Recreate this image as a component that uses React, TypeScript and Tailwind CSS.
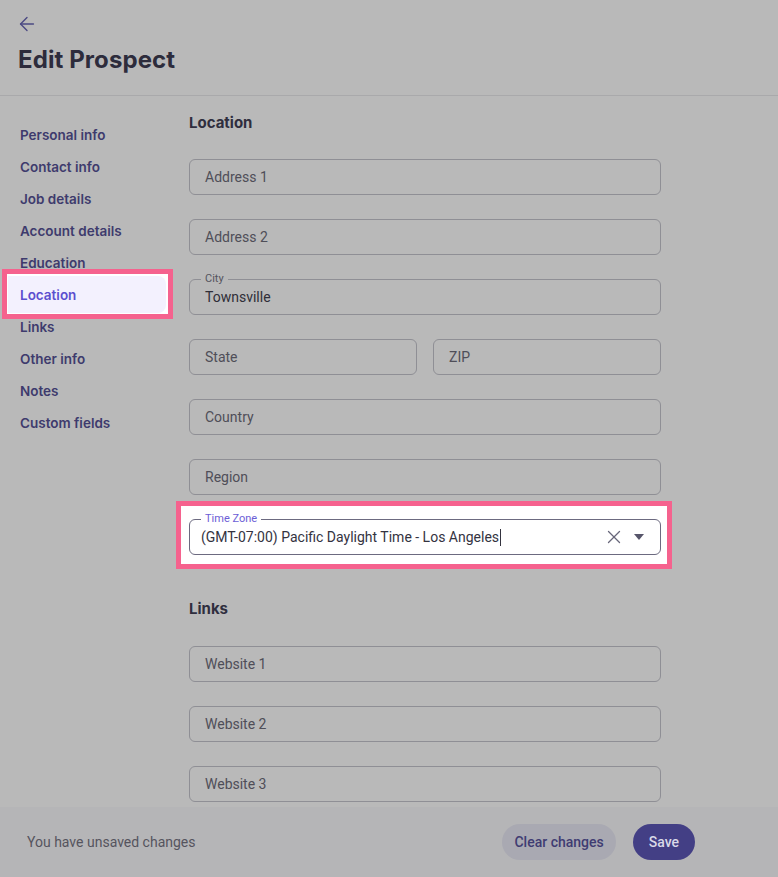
import React from 'react';
import { ArrowLeft, X } from 'lucide-react';

const navItems = [
  'Personal info',
  'Contact info',
  'Job details',
  'Account details',
  'Education',
  'Location',
  'Links',
  'Other info',
  'Notes',
  'Custom fields',
];

// Campo con placeholder simple
const Field: React.FC<{ placeholder: string; className?: string }> = ({ placeholder, className = '' }) => (
  <div
    className={`h-9 rounded-md border border-[#8f8f95] flex items-center pl-[15px] pr-4 text-sm text-[#4f4e58] ${className}`}
    style={{ fontFamily: 'Roboto, sans-serif' }}
  >
    {placeholder}
  </div>
);

// Campo con etiqueta flotante
const FilledField: React.FC<{ label: string; value: string }> = ({ label, value }) => (
  <div
    className="relative h-9 rounded-md border border-[#8f8f95] flex items-center pl-[15px] pr-4 text-sm text-[#2f2e38]"
    style={{ fontFamily: 'Roboto, sans-serif' }}
  >
    <span className="absolute -top-[7px] left-[11px] px-1 bg-[#b9b9b9] text-[11px] leading-[12px] text-[#55545e]">
      {label}
    </span>
    {value}
  </div>
);

const App: React.FC = () => {
  return (
    <div className="h-screen flex flex-col bg-[#b9b9b9] overflow-hidden" style={{ fontFamily: 'Inter, sans-serif' }}>
      {/* Encabezado */}
      <header className="border-b border-[#a9a9ab] px-[18px] pt-[13px] pb-[20px]">
        <ArrowLeft className="w-[22px] h-[22px] text-[#4b4983] -ml-[2px]" strokeWidth={1.5} />
        <h1 className="mt-[10px] text-[24px] leading-[30px] font-bold text-[#2d2c3c] tracking-[0.1px]">Edit Prospect</h1>
      </header>

      <div className="flex-1 flex min-h-0 overflow-hidden">
        {/* Menú lateral */}
        <nav className="w-[189px] shrink-0 pt-[23px]">
          <ul>
            {navItems.map((item) => {
              const active = item === 'Location';
              return (
                <li key={item} className="relative h-8 flex items-center pl-5 w-[172px]">
                  {active && (
                    <div className="absolute left-[2px] right-[-1px] -top-[10px] -bottom-[8px] border-[5px] border-[#f5628e] bg-white">
                      <div className="absolute left-[1px] right-[2px] top-[2px] bottom-[1px] bg-[#f3f1fe] rounded-r-lg" />
                    </div>
                  )}
                  <span
                    className={`relative text-[13.5px] font-semibold ${active ? 'text-[#5b4fcf]' : 'text-[#3e3b6d]'}`}
                  >
                    {item}
                  </span>
                </li>
              );
            })}
          </ul>
        </nav>

        {/* Formulario */}
        <main className="w-[472px] pt-[17px]">
          <h2 className="text-[15px] leading-5 font-bold text-[#2f2e3e]">Location</h2>
          <div className="mt-[26px] flex flex-col gap-6">
            <Field placeholder="Address 1" />
            <Field placeholder="Address 2" />
            <FilledField label="City" value="Townsville" />
            <div className="flex gap-4">
              <Field placeholder="State" className="flex-1" />
              <Field placeholder="ZIP" className="flex-1" />
            </div>
            <Field placeholder="Country" />
            <Field placeholder="Region" />

            {/* Zona horaria resaltada */}
            <div className="relative">
              <div className="absolute -left-[13px] -right-[11px] -top-[18px] -bottom-[14px] border-[5px] border-[#f5628e] bg-white" />
              <div
                className="relative h-9 rounded-md border border-[#6c6a80] flex items-center pl-[11px] pr-[15px] text-sm text-[#34333f]"
                style={{ fontFamily: 'Roboto, sans-serif' }}
              >
                <span className="absolute -top-[7px] left-[11px] px-1 bg-white text-[11px] leading-[12px] text-[#6c5ed6]">
                  Time Zone
                </span>
                <span className="flex-1 flex items-center">
                  (GMT-07:00) Pacific Daylight Time - Los Angeles
                  <span className="w-px h-[17px] bg-[#34333f] ml-px" />
                </span>
                <X className="w-[22px] h-[22px] text-[#67667a] mr-[8px]" strokeWidth={1.4} />
                <svg className="w-[12px] h-[8px]" viewBox="0 0 12 8">
                  <path d="M1 1h10L6 7z" fill="#56556a" />
                </svg>
              </div>
            </div>
          </div>

          <h2 className="mt-[44px] text-[15px] leading-5 font-bold text-[#2f2e3e]">Links</h2>
          <div className="mt-[27px] flex flex-col gap-6">
            <Field placeholder="Website 1" />
            <Field placeholder="Website 2" />
            <Field placeholder="Website 3" />
          </div>
        </main>
      </div>

      {/* Pie con acciones */}
      <footer
        className="h-[70px] shrink-0 bg-[#b5b5b7] flex items-center justify-between pl-[27px] pr-[83px]"
        style={{ fontFamily: 'Roboto, sans-serif' }}
      >
        <span className="text-sm text-[#55545e]">You have unsaved changes</span>
        <div className="flex items-center gap-[17px]">
          <button className="h-9 px-3 rounded-full bg-[#a9a9b2] text-sm font-medium text-[#3f3c72]">
            Clear changes
          </button>
          <button className="h-9 px-4 rounded-full bg-[#433f85] text-sm font-medium text-[#d9d9e8]">
            Save
          </button>
        </div>
      </footer>
    </div>
  );
};

export default App;
